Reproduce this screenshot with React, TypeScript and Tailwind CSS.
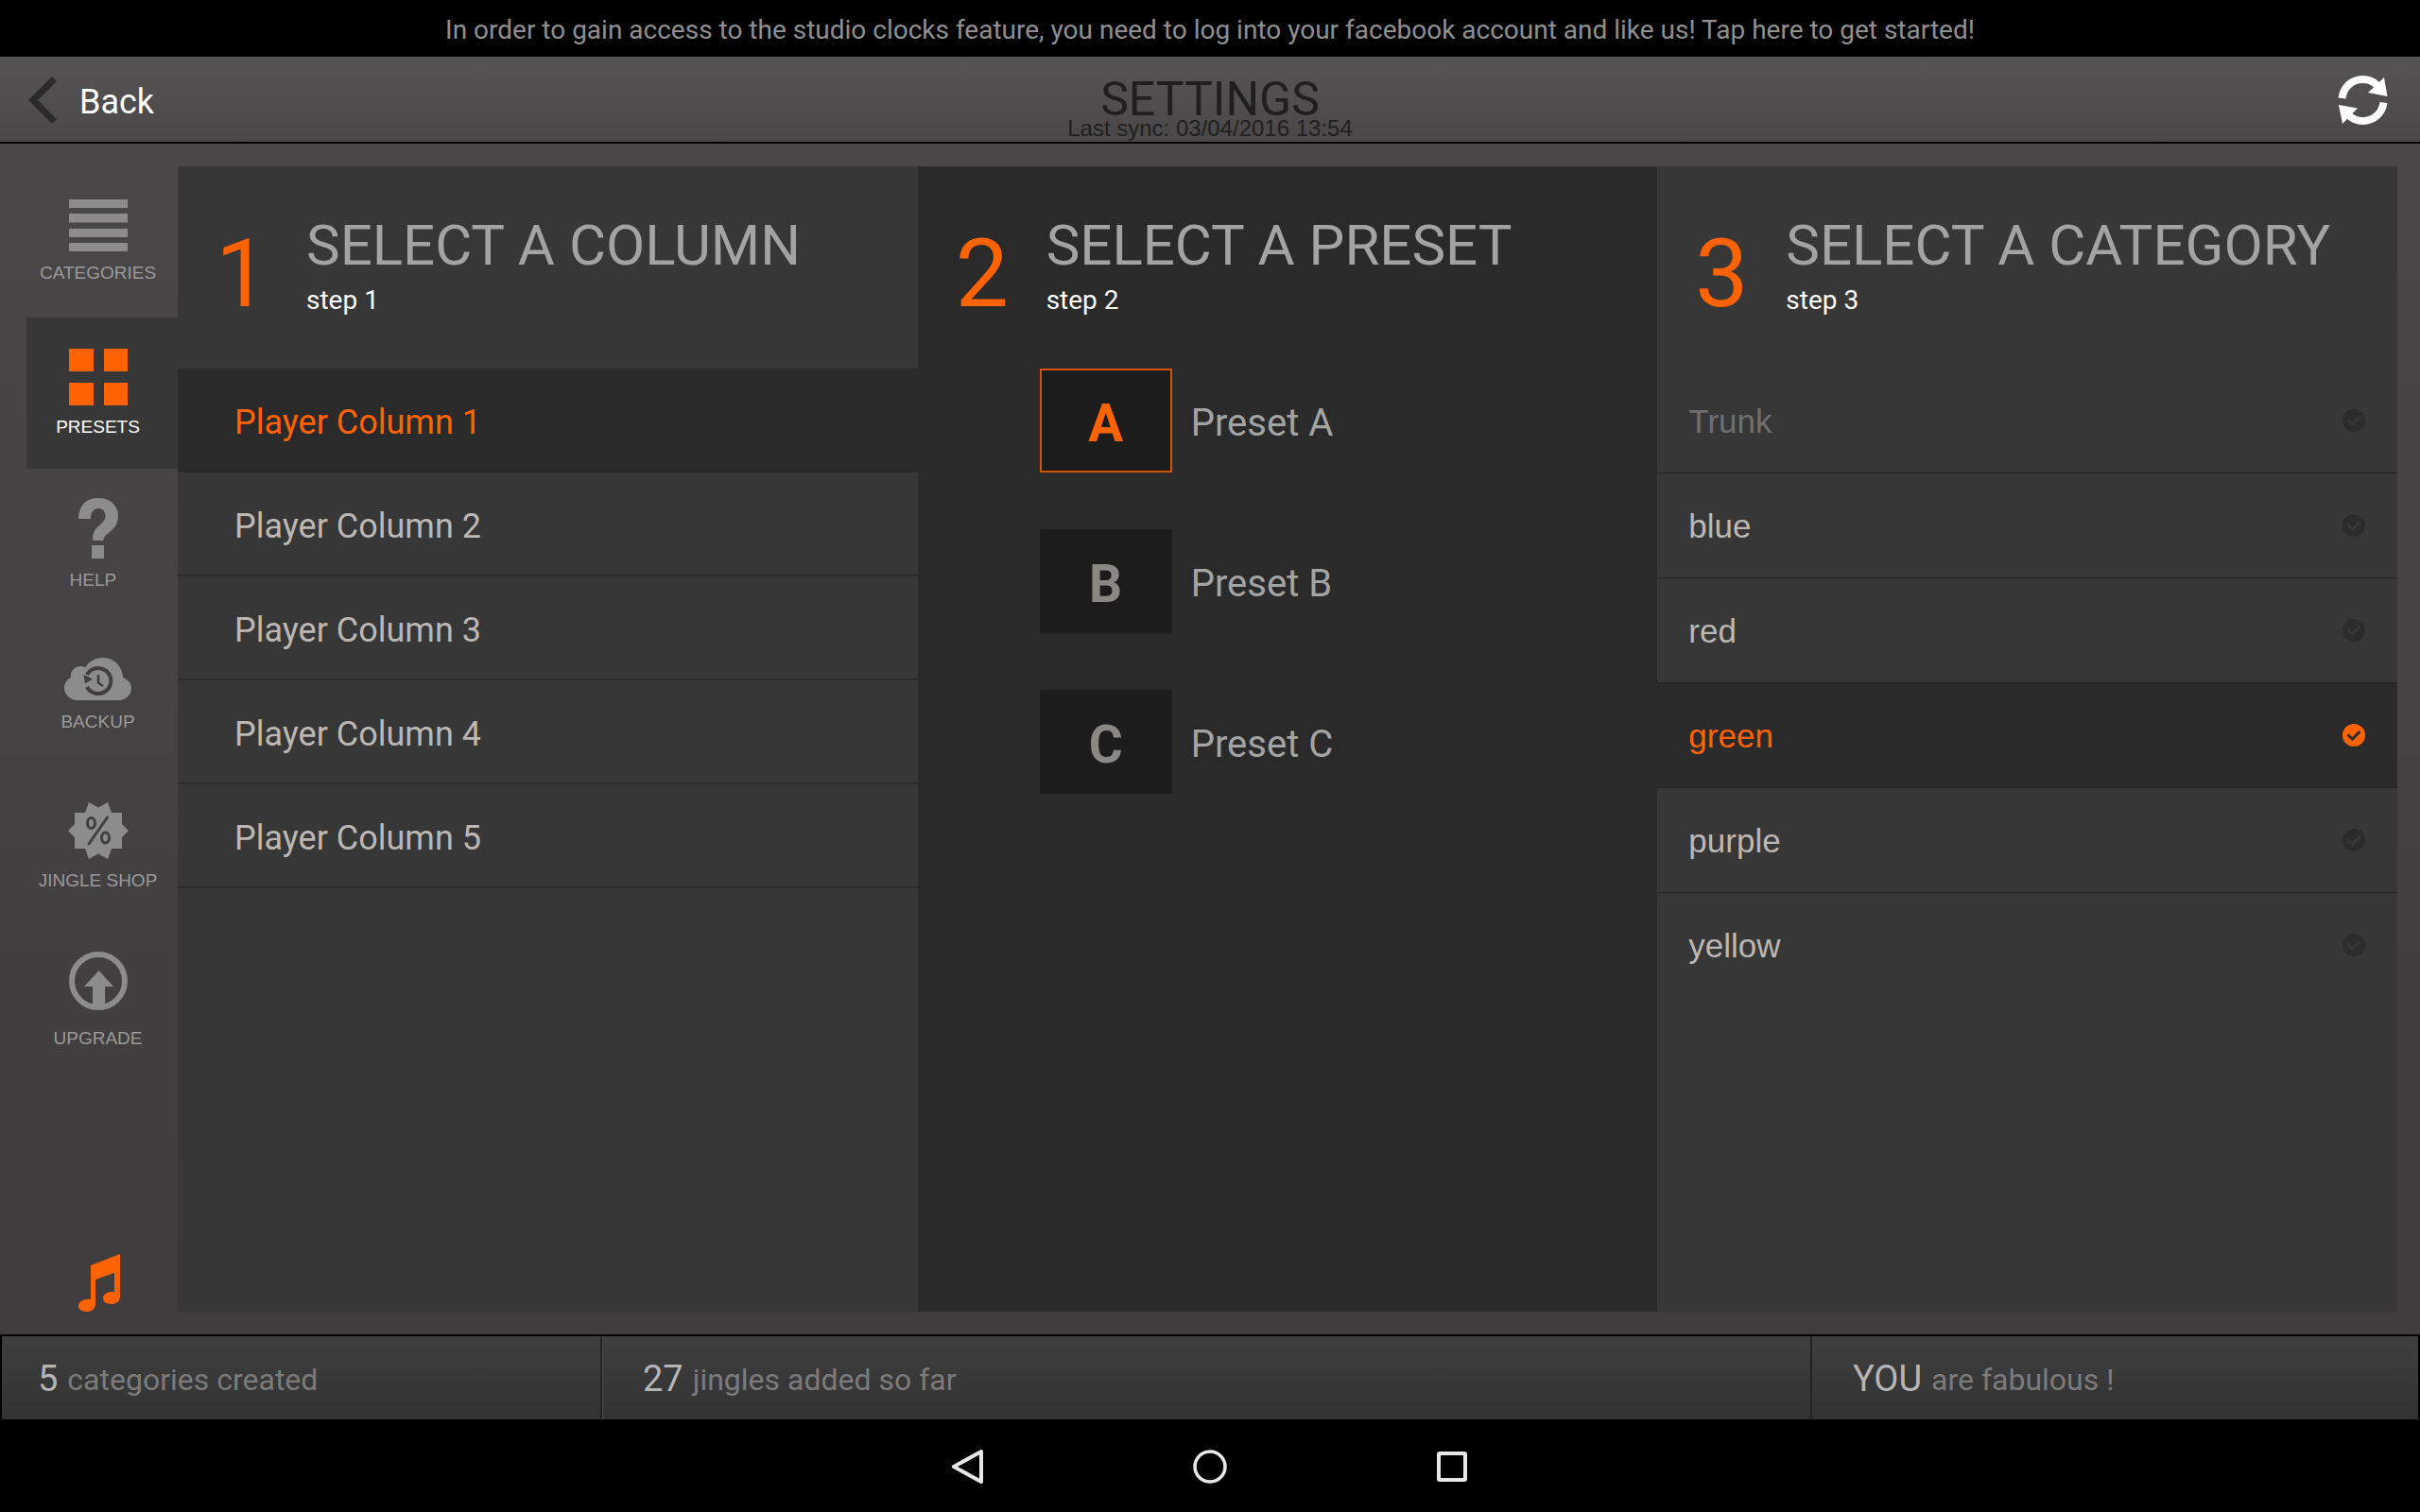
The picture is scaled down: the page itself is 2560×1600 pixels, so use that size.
import { useState } from 'react'
import type { ReactNode } from 'react'

type SideItem = { label: string; icon: ReactNode }

const sideItems: SideItem[] = [
  {
    label: 'CATEGORIES',
    icon: (
      <svg width="62" height="55" viewBox="0 0 62 55" fill="currentColor" aria-hidden="true">
        <path d="M0 0h62v9H0zM0 15h62v9.500H0zM0 31h62v9H0zM0 46h62v9H0z" />
      </svg>
    ),
  },
  {
    label: 'PRESETS',
    icon: (
      <svg width="62" height="60" viewBox="0 0 62 60" fill="#ff6200" aria-hidden="true">
        <path d="M0 0h26v24H0zM37 0h25v24H37zM0 36h26v24H0zM37 36h25v24H37z" />
      </svg>
    ),
  },
  {
    // trailing blanks keep the word under the hook of the question mark
    label: 'HELP  ',
    icon: (
      <svg width="44" height="65" viewBox="0 0 44 65" fill="currentColor" aria-hidden="true">
        <path d="M1 23C1 9 9 1 22 1c13 0 21 8 21 19 0 8-4 13-10 18-5 4-5.500 5-5.500 8H16c0-8 1.500-11 7-16 4-3.500 6.500-6 6.500-10 0-5-3-8-7.500-8-5 0-8 4-8 11zM15 51h13v14H15z" />
      </svg>
    ),
  },
  {
    label: 'BACKUP',
    icon: (
      <svg width="71" height="45" viewBox="0 0 71 45" fill="none" aria-hidden="true">
        <path
          d="M13 45C5 44 0 38 0 32c0-5 3-9 7-11C6 14 11 9 17 9c2 0 4 .500 5 1.500C26 4 33 0 41 0c11 0 20 8 21 20v1c5 2 9 6 9 11 0 7-5 12-12 13z"
          fill="currentColor"
        />
        <path d="M24 18a13.500 13.500 0 1 1 0 13" stroke="#403e3f" strokeWidth="4" />
        <path d="M20.500 18l1.500 9.500 8-5z" fill="#403e3f" />
        <path d="M36 18v8.500l5 3.500" stroke="#403e3f" strokeWidth="2.500" />
      </svg>
    ),
  },
  {
    label: 'JINGLE SHOP',
    icon: (
      <svg width="64" height="60" viewBox="0 0 64 60" fill="none" aria-hidden="true">
        <path
          d="M22 0l10 5.500L42 0l4 11h11v12l7 7-7 7v12H46l-4 11-10-5.500L22 60l-4-11H7V37l-7-7 7-7V11h11z"
          fill="currentColor"
        />
        <ellipse cx="24.500" cy="22" rx="4" ry="5.500" stroke="#403e3f" strokeWidth="3" />
        <ellipse cx="39.500" cy="37.500" rx="4" ry="5.500" stroke="#403e3f" strokeWidth="3" />
        <path d="M41.500 16L22 44" stroke="#403e3f" strokeWidth="3" strokeLinecap="round" />
      </svg>
    ),
  },
  {
    label: 'UPGRADE',
    icon: (
      <svg width="62" height="75" viewBox="0 0 62 75" fill="none" aria-hidden="true">
        <circle cx="31" cy="37" r="28" stroke="currentColor" strokeWidth="6" />
        <path d="M31.500 26L47 43h-9v20H25V43h-9z" fill="currentColor" />
      </svg>
    ),
  },
]

const columns = ['Player Column 1', 'Player Column 2', 'Player Column 3', 'Player Column 4', 'Player Column 5']
const presets = ['A', 'B', 'C']
const categories = ['Trunk', 'blue', 'red', 'green', 'purple', 'yellow']

const StepHeader = ({ step, title }: { step: number; title: string }) => (
  <div className="flex h-[214px] items-start pl-10 pt-12">
    <div className="flex items-end gap-10">
      <span className="w-14 text-[100px] leading-[100px] text-[#ff6200]">{step}</span>
      <div>
        <h2 className="whitespace-nowrap text-[60px] leading-[72px] text-[#a3a3a3]">{title}</h2>
        <p className="text-[28px] leading-[44px] text-white">step {step}</p>
      </div>
    </div>
  </div>
)

const CheckMark = ({ on }: { on: boolean }) => (
  <svg width="24" height="24" viewBox="0 0 24 24" fill="none" aria-hidden="true">
    <circle cx="12" cy="12" r="12" fill={on ? '#ff6200' : '#2c2c2c'} />
    <path d="M5.500 11.500l5 4.500 8-8" stroke={on ? '#2a2a2a' : '#373737'} strokeWidth="3" />
  </svg>
)

const App = () => {
  const [section, setSection] = useState('PRESETS')
  const [column, setColumn] = useState('Player Column 1')
  const [preset, setPreset] = useState('A')
  const [category, setCategory] = useState('green')

  return (
    <div className="flex min-h-screen flex-col bg-black font-[Roboto,sans-serif]">
      <a href="#" className="block h-[60px] text-center text-[28px] leading-[64px] text-[#8f8f8f]">
        In order to gain access to the studio clocks feature, you need to log into your facebook account and like us! Tap here to get started!
      </a>

      <header className="grid h-[92px] grid-cols-3 border-b-2 border-black bg-linear-to-b from-[#565453] to-[#494748]">
        <button className="flex items-center gap-6 justify-self-start pl-[30px] pt-0.5 text-[36px] text-white">
          <svg width="30" height="50" viewBox="0 0 30 50" fill="#2a2a2a" aria-hidden="true">
            <path d="M25 0l5 5-20 20 20 20-5 5L0 25z" />
          </svg>
          <span className="pt-1">Back</span>
        </button>
        <div className="pt-6 text-center text-[#1f1f1f]">
          <h1 className="text-[50px] leading-[42px]">SETTINGS</h1>
          <p className="font-['Liberation_Sans',sans-serif] text-[24px] leading-5">Last sync: 03/04/2016 13:54</p>
        </div>
        <button aria-label="Sync" className="justify-self-end pr-[34px] pt-0.5 text-white">
          <svg width="53" height="52" viewBox="0 0 53 52" fill="none" aria-hidden="true">
            <path d="M4.500 24C6 12 15 4 26.500 4c6 0 11 2 15 6" stroke="currentColor" strokeWidth="8" />
            <path d="M48.500 28.500C47 40 38 48 26.500 48c-6 0-11-2-15-6" stroke="currentColor" strokeWidth="8" />
            <path d="M49 2l3.500 20L32 18zM1 31l20 3.500L5 51z" fill="currentColor" />
          </svg>
        </button>
      </header>

      <main className="flex flex-1 bg-linear-to-b from-[#4a4748] to-[#3f3c3d] py-6 pr-6">
        <nav className="flex w-[188px] shrink-0 flex-col pl-7">
          {sideItems.map((item) => (
            <button
              key={item.label}
              onClick={() => setSection(item.label)}
              className={`flex h-40 flex-col items-center justify-center gap-[11px] pr-[9px] ${
                section === item.label ? 'bg-[#373737]' : ''
              }`}
            >
              <span className="block text-[#8c8c8c]">{item.icon}</span>
              <span
                className={`whitespace-pre font-['Liberation_Sans',sans-serif] text-[19px] leading-6 ${
                  section === item.label ? 'text-white' : 'text-[#9a9a9a]'
                }`}
              >
                {item.label}
              </span>
            </button>
          ))}
          <svg className="ml-[55px] mt-auto" width="44" height="61" viewBox="0 0 44 61" fill="#ff6200" aria-hidden="true">
            <path d="M13 12L44 0v45c0 5-4 8-9 8-6 0-9-3-9-6 0-5 6-8 12-7V20L18 27v26c0 5-4 8-9 8-6 0-9-3-9-6 0-5 6-8 13-7z" />
          </svg>
        </nav>

        <div className="grid flex-1 grid-cols-3">
          <section className="bg-[#373737]">
            <StepHeader step={1} title="SELECT A COLUMN" />
            <ul>
              {columns.map((name) => (
                <li key={name}>
                  <button
                    onClick={() => setColumn(name)}
                    className={`block h-[110px] w-full border-b-2 border-[#2a2a2a] pl-[60px] pt-1.5 text-left text-[36px] ${
                      column === name ? 'bg-[#2a2a2a] text-[#ff6200]' : 'text-[#bbb7b4]'
                    }`}
                  >
                    {name}
                  </button>
                </li>
              ))}
            </ul>
          </section>

          <section className="bg-[#2a2a2a]">
            <StepHeader step={2} title="SELECT A PRESET" />
            <ul className="flex flex-col gap-[60px] pl-[129px]">
              {presets.map((name) => (
                <li key={name}>
                  <button onClick={() => setPreset(name)} className="flex items-center gap-5 text-[40px] text-[#a3a3a3]">
                    <span
                      className={`flex h-[110px] w-[140px] items-center justify-center border-2 bg-[#1c1c1c] pt-1.5 text-[55px] font-bold ${
                        preset === name ? 'border-[#d35400] text-[#ff6200]' : 'border-[#1c1c1c] text-[#8a8884]'
                      }`}
                    >
                      {name}
                    </span>
                    <span className="pt-1.5">Preset {name}</span>
                  </button>
                </li>
              ))}
            </ul>
          </section>

          <section className="bg-[#373737]">
            <StepHeader step={3} title="SELECT A CATEGORY" />
            <ul className="divide-y divide-[#222222]">
              {categories.map((name) => (
                <li key={name}>
                  <button
                    onClick={() => setCategory(name)}
                    className={`flex h-[110px] w-full items-center justify-between pl-[33px] pr-[34px] font-['Liberation_Sans',sans-serif] text-[35px] ${
                      category === name ? 'bg-[#2a2a2a] text-[#ff6200]' : name === 'Trunk' ? 'text-[#6f6f6f]' : 'text-[#bbb7b4]'
                    }`}
                  >
                    <span className="pt-0.5">{name}</span>
                    <CheckMark on={category === name} />
                  </button>
                </li>
              ))}
            </ul>
          </section>
        </div>
      </main>

      <footer className="mx-0.5 mt-0.5 grid h-[88px] grid-cols-[635px_1fr_643px] bg-linear-to-b from-[#3f3f3f] to-[#323232] text-[32px] text-[#7b7b7b]">
        <p className="flex items-center gap-2.5 border-r-2 border-[#222222] pl-[38px] pt-[3px]">
          <span className="text-[38px] text-[#b5b5b5]">5</span>
          categories created
        </p>
        <p className="flex items-center gap-2.5 border-l border-[#4a4a4a] pl-[42px] pt-[3px]">
          <span className="text-[38px] text-[#b5b5b5]">27</span>
          jingles added so far
        </p>
        <p className="flex items-center gap-2.5 border-l-2 border-[#222222] pl-[43px] pt-[3px]">
          <span className="text-[38px] text-[#b5b5b5]">YOU</span>
          are fabulous !
        </p>
      </footer>

      <div className="flex h-[98px] items-center justify-center gap-[216px] pt-0.5">
        <button aria-label="Go back">
          <svg width="40" height="40" viewBox="0 0 40 40" fill="none" stroke="#e8e8e6" strokeWidth="4" strokeLinejoin="round" aria-hidden="true">
            <path d="M34 4v32L5 20z" />
          </svg>
        </button>
        <button aria-label="Home">
          <svg width="40" height="40" viewBox="0 0 40 40" fill="none" stroke="#e8e8e6" strokeWidth="3.500" aria-hidden="true">
            <circle cx="20" cy="20" r="16" />
          </svg>
        </button>
        <button aria-label="Recent apps">
          <svg width="40" height="40" viewBox="0 0 40 40" fill="none" stroke="#e8e8e6" strokeWidth="4" aria-hidden="true">
            <rect x="6" y="6" width="28" height="28" rx="1" />
          </svg>
        </button>
      </div>
    </div>
  )
}

export default App
